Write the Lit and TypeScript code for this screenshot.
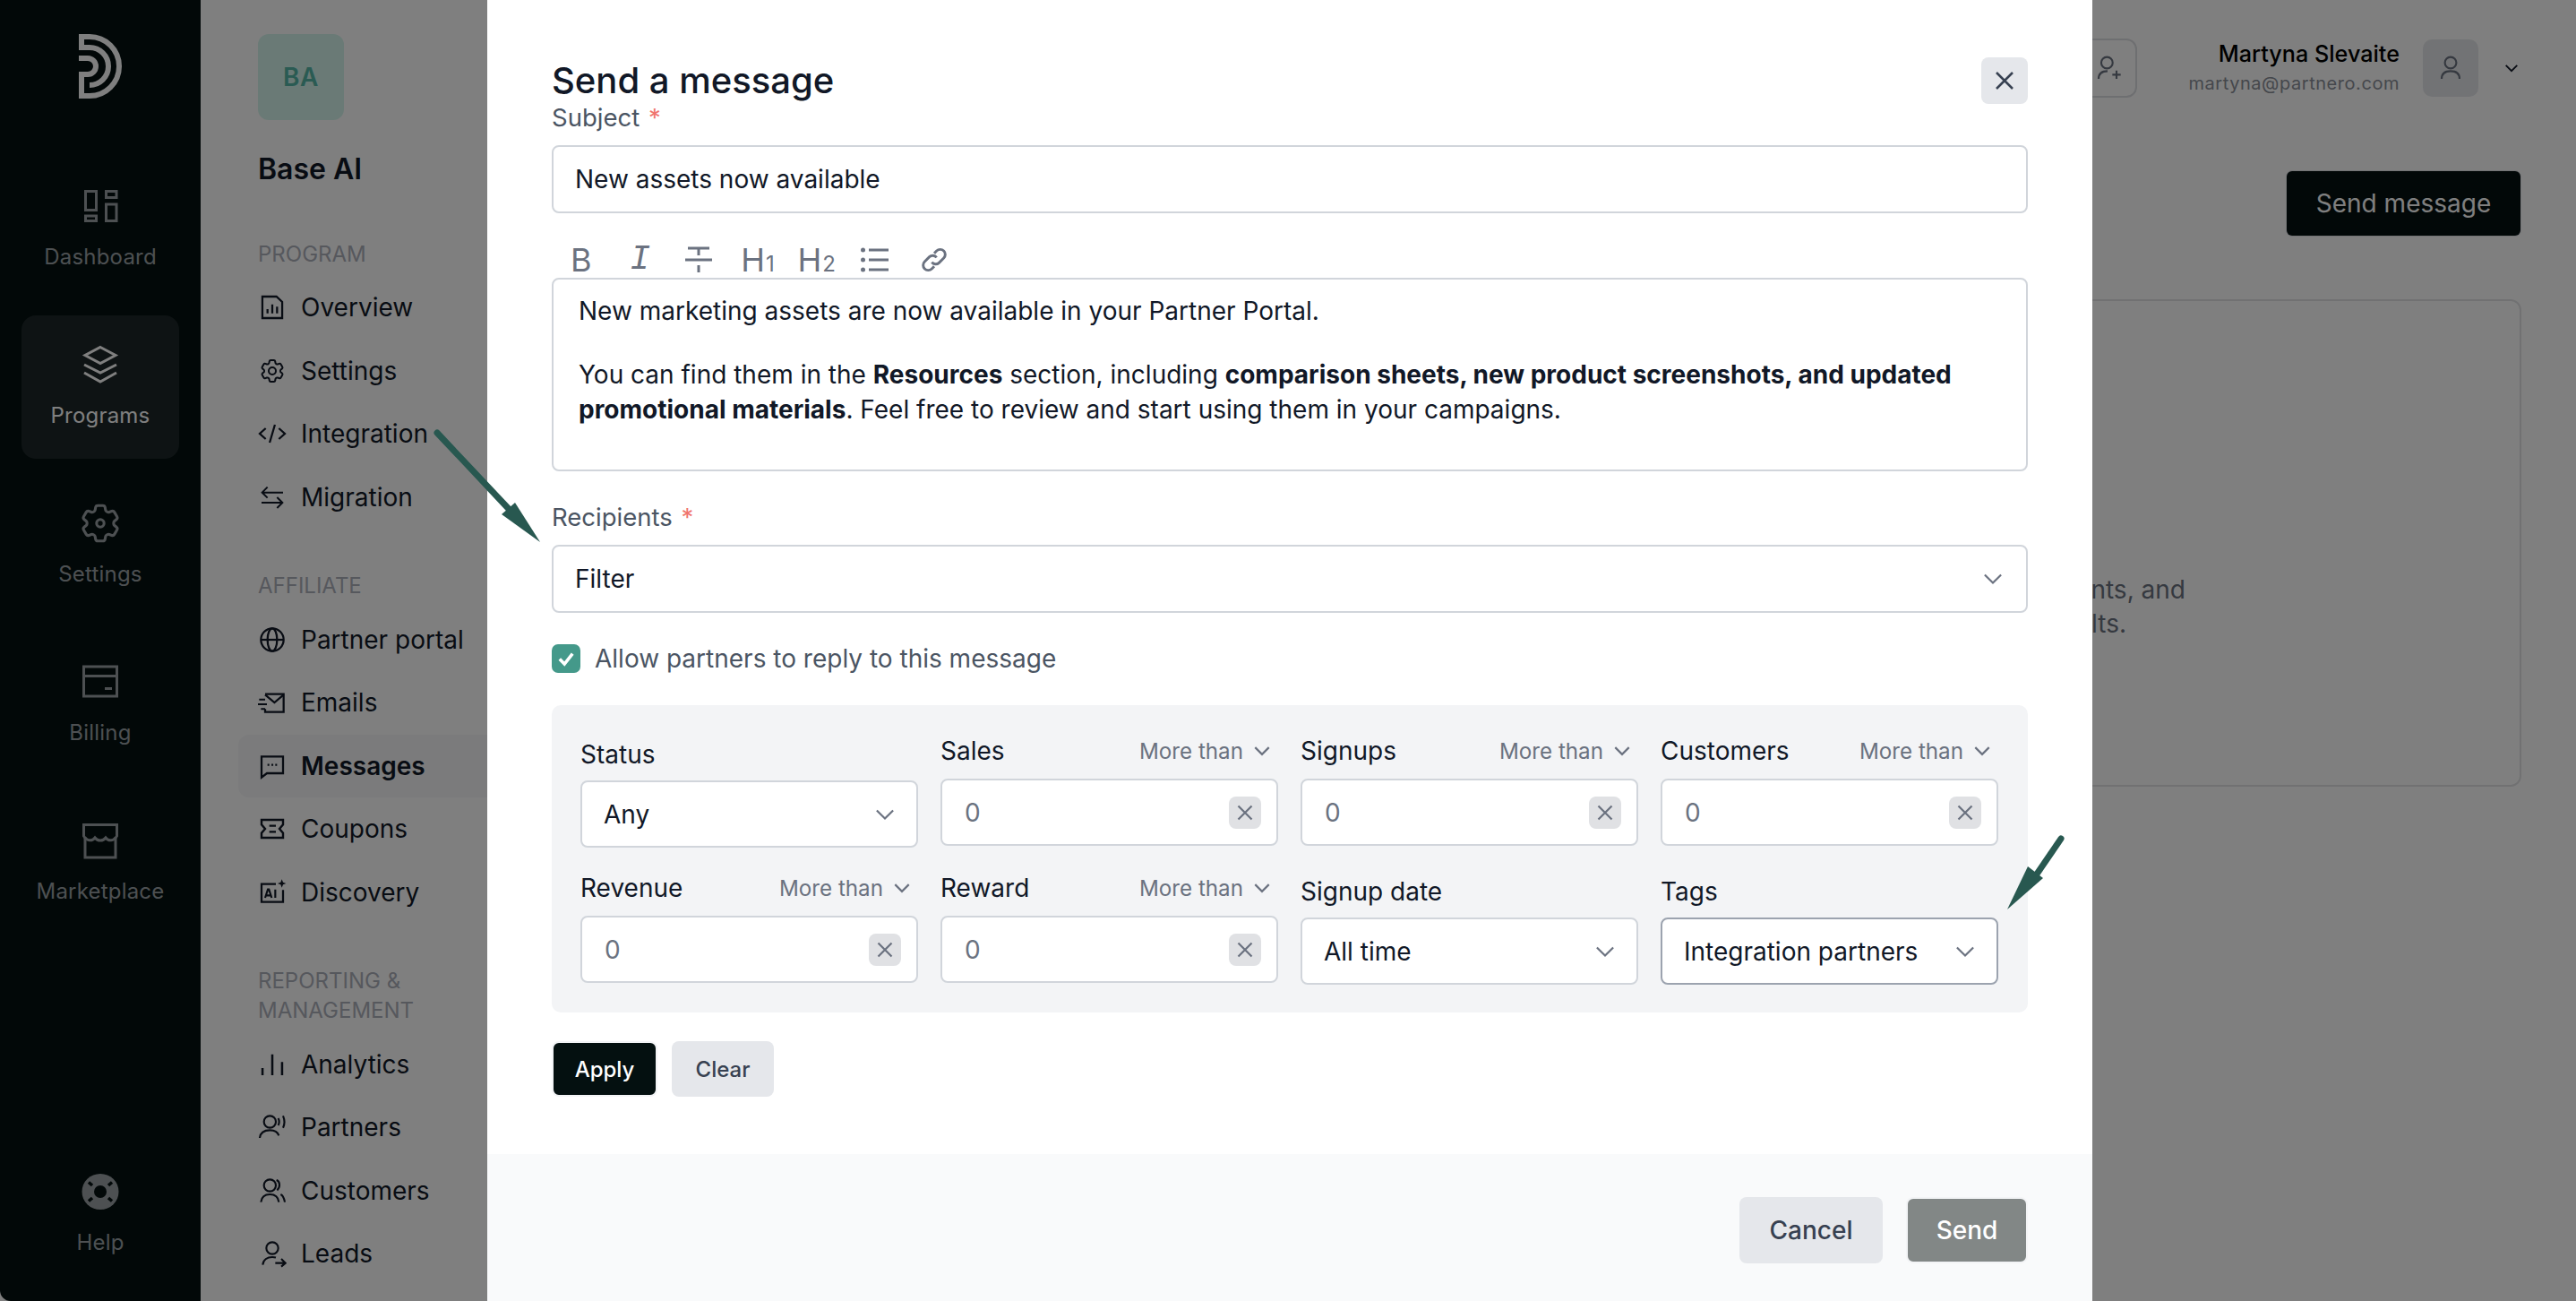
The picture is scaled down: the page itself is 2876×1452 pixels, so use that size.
import { LitElement, html, css, svg } from "lit";
import { customElement } from "lit/decorators.js";

const ic = (box: number, body: unknown, size = 32) => html`<svg class="ic" width=${size} height=${size} viewBox="0 0 ${box} ${box}" fill="none" stroke="currentColor" stroke-width="1.5">${body}</svg>`;

const gear = svg`<path d="M9.594 3.94c.09-.542.56-.94 1.11-.94h2.593c.55 0 1.02.398 1.11.94l.213 1.281c.063.374.313.686.645.87.074.04.147.083.22.127.325.196.72.257 1.075.124l1.217-.456a1.125 1.125 0 0 1 1.37.49l1.296 2.247a1.125 1.125 0 0 1-.26 1.431l-1.003.827c-.293.241-.438.613-.43.992a7.723 7.723 0 0 1 0 .255c-.008.378.137.75.43.991l1.004.827c.424.35.534.955.26 1.43l-1.298 2.247a1.125 1.125 0 0 1-1.369.491l-1.217-.456c-.355-.133-.75-.072-1.076.124a6.47 6.47 0 0 1-.22.128c-.331.183-.581.495-.644.869l-.213 1.281c-.09.543-.56.94-1.11.94h-2.594c-.55 0-1.019-.398-1.11-.94l-.213-1.281c-.062-.374-.312-.686-.644-.87a6.52 6.52 0 0 1-.22-.127c-.325-.196-.72-.257-1.076-.124l-1.217.456a1.125 1.125 0 0 1-1.369-.49l-1.297-2.247a1.125 1.125 0 0 1 .26-1.431l1.004-.827c.292-.24.437-.613.43-.991a6.932 6.932 0 0 1 0-.255c.007-.38-.138-.751-.43-.992l-1.004-.827a1.125 1.125 0 0 1-.26-1.43l1.297-2.247a1.125 1.125 0 0 1 1.37-.491l1.216.456c.356.133.751.072 1.076-.124.072-.044.146-.086.22-.128.332-.183.582-.495.644-.869l.214-1.28Z"/>`;

const railIcons: Record<string, unknown> = {
  dashboard: svg`<g stroke-width="3"><rect x="7.5" y="7.5" width="12" height="21"/><rect x="7.5" y="35" width="12" height="5.5"/><rect x="30.5" y="7.5" width="11.5" height="7"/><rect x="30.5" y="22" width="11.5" height="18.5"/></g>`,
  programs: svg`<g stroke-width="3"><path d="M24 4.5 41 13.5 24 22.5 7 13.5Z"/><path d="M6 24 24 33 42 24"/><path d="M6 33 24 43 42 33"/></g>`,
  settings: svg`<g transform="translate(-2.4 -2.4) scale(2.2)" stroke-width="1.4">${gear}<circle cx="12" cy="12" r="1.9"/></g>`,
  billing: svg`<g stroke-width="3"><rect x="5.5" y="7" width="37" height="33"/><path d="M5.5 17.5H42.5"/><path d="M29 31.5H37"/></g>`,
  marketplace: svg`<g stroke-width="3"><path d="M7 20V43H41V20"/><path d="M5.5 6.500H42.500V19C39 25 33 25 30 21C27 25 21 25 18 21C15 25 9 25 5.500 19Z"/></g>`,
  help: svg`<ellipse cx="24" cy="24" rx="20.500" ry="20" fill="currentColor" stroke="none"/><circle cx="24" cy="24" r="7" fill="#041010" stroke="none"/><g stroke="#041010" stroke-width="3.500"><path d="M11 13.500 15 17"/><path d="M37 13.500 33 17"/><path d="M11 34.500 15 31"/><path d="M37 34.500 33 31"/></g>`,
};

const navIcons: Record<string, unknown> = {
  overview: svg`<path d="M3.700 3H15.500L20.300 7.500V21H3.700Z" stroke-width="1.700"/><path d="M8 17V13.500M12 17V9.500M16 17V11.500" stroke-width="1.700"/>`,
  settings: svg`${gear}<circle cx="12" cy="12" r="3"/>`,
  code: svg`<path d="M6.500 7.500 1.500 12 6.500 16.500M17.500 7.500 22.500 12 17.500 16.500M14.200 4.500 9.800 19.500" stroke-width="1.700"/>`,
  swap: svg`<path d="M21 8H4M8 3.500 3.500 8 8 12.500M3 16.500H20M16 12 20.500 16.500 16 21"/>`,
  globe: svg`<circle cx="12" cy="12" r="9.500" stroke-width="1.700"/><ellipse cx="12" cy="12" rx="4" ry="9.500" stroke-width="1.700"/><path d="M2.500 12H21.500" stroke-width="1.700"/>`,
  emails: svg`<path d="M6 5H21.500V20H6V17.500" stroke-width="1.700"/><path d="M6 5.500 13.800 12 21.500 5.500" stroke-width="1.700"/><path d="M1 9.500H6M-.5 13.500H7.500M2.500 17.500H6" stroke-width="1.500"/>`,
  chat: svg`<path d="M3 4H21V18H7.500L3 21.500Z" stroke-width="1.700"/><path d="M8 11H9.500M11.300 11H12.800M14.500 11H16" stroke-width="1.700"/>`,
  coupon: svg`<path d="M3 4.500H21V8.500L18 12 21 15.500V19.500H3V15.500L6 12 3 8.500Z" stroke-width="1.800"/><path d="M9.500 9.500H15M9.500 14.500H15" stroke-width="1.800"/>`,
  ai: svg`<path d="M15 5H3V20H21V10" stroke-width="1.700"/><path d="M6 16.500 8.300 9.500H9.200L11.500 16.500M7 14.500H10.500M14.500 9.500V16.500" stroke-width="1.600"/><path d="M20 1 21 3.500 23.500 4.500 21 5.500 20 8 19 5.500 16.500 4.500 19 3.500Z" fill="currentColor" stroke="none"/>`,
  bars: svg`<path d="M3.800 21V15M12 21V3.500M20.200 21V10" stroke-width="1.900"/>`,
  partners: svg`<circle cx="10" cy="7.500" r="5" stroke-width="1.600"/><path d="M1.500 21C2 16.500 5.500 14.500 10 14.500C14 14.500 16.500 16 17.500 19" stroke-width="1.600"/><path d="M17 4.500C18 6.500 18 8.500 17 10.500M21 2.500C22.500 6 22.500 9.500 21 12.500" stroke-width="1.600"/>`,
  customers: svg`<circle cx="10" cy="7.500" r="5" stroke-width="1.600"/><path d="M2.500 21.500C3 17 6 15 10 15C14 15 17 17 17.500 21.500" stroke-width="1.600"/><path d="M15.500 3C18.500 4 19 9 16 11.500M19 15C21 16 22 18.500 22.500 21.500" stroke-width="1.600"/>`,
  leads: svg`<circle cx="12" cy="7.500" r="5" stroke-width="1.600"/><path d="M4 21.500C4.500 17 8 15 12 15C13 15 14 15.100 15 15.400" stroke-width="1.600"/><path d="M14.500 20H23M19.500 16.500 23 20 19.500 23" stroke-width="1.600"/>`,
};

const chevron = (size = 20, sw = 1.700) => html`<svg class="chev" width=${size} height=${size} viewBox="0 0 20 20" fill="none" stroke="currentColor" stroke-width=${sw}><path d="M3 6.500 10 13.500 17 6.500"/></svg>`;
const xIcon = (size = 16, sw = 2) => html`<svg width=${size} height=${size} viewBox="0 0 16 16" fill="none" stroke="currentColor" stroke-width=${sw}><path d="M2 2 14 14M14 2 2 14"/></svg>`;

const sections = [
  { label: ["PROGRAM"], items: [["overview", "Overview"], ["settings", "Settings"], ["code", "Integration"], ["swap", "Migration"]] },
  { label: ["AFFILIATE"], items: [["globe", "Partner portal"], ["emails", "Emails"], ["chat", "Messages"], ["coupon", "Coupons"], ["ai", "Discovery"]] },
  { label: ["REPORTING &", "MANAGEMENT"], items: [["bars", "Analytics"], ["partners", "Partners"], ["customers", "Customers"], ["leads", "Leads"]] },
];

@customElement("app-root")
export class AppRoot extends LitElement {
  static styles = css`
    :host { display: block; width: 2876px; height: 1452px; position: relative; overflow: hidden; font-family: Inter, "Noto Sans", sans-serif; background: #fff; color: #111827; }
    * { box-sizing: border-box; }
    svg { display: block; flex: none; }
    .page { display: flex; height: 1452px; }

    .rail { width: 224px; flex: none; background: #041010; display: flex; flex-direction: column; padding: 38px 24px 17px; color: #9aa1a5; border-bottom-left-radius: 12px; }
    .logo { align-self: center; color: #fff; margin-bottom: 65px; }
    .rail-list { display: flex; flex-direction: column; gap: 17px; }
    .rail-item { height: 160px; border-radius: 16px; padding-top: 31px; display: flex; flex-direction: column; align-items: center; font-size: 24px; line-height: 36px; }
    .rail-item span { margin-top: 15px; letter-spacing: .2px; }
    .rail-item.active { background: #1c2728; color: #fff; }
    .rail-item.help { margin-top: auto; }

    .subnav { width: 320px; flex: none; background: #fff; padding: 38px 0 0 64px; overflow: hidden; }
    .ba { width: 96px; height: 96px; border-radius: 12px; background: #d4f5ec; color: #54b6a6; display: flex; align-items: center; justify-content: center; font-size: 28px; font-weight: 600; letter-spacing: .5px; }
    .brand { margin-top: 35px; font-size: 32px; line-height: 40px; font-weight: 600; }
    .section { margin-top: 47px; }
    .section.first { margin-top: 58px; }
    .sec-label { font-size: 24px; line-height: 33px; color: #adb0bb; }
    .nav-list { margin-top: 8px; }
    .nav-item { height: 70.6px; margin-left: -22px; padding-left: 22px; display: flex; align-items: center; gap: 16px; font-size: 28px; white-space: nowrap; border-radius: 12px 0 0 12px; color: #111827; }
    .nav-item.active { background: #f6f7f8; font-weight: 600; }

    .main { flex: 1; min-width: 0; padding: 43px 61px 0 0; display: flex; flex-direction: column; align-items: flex-end; }
    .top { display: flex; align-items: center; height: 66px; }
    .invite { width: 62px; height: 66px; border: 2px solid #dcdee2; border-radius: 12px; display: flex; align-items: center; justify-content: center; color: #6b7280; }
    .who { margin-left: 57px; text-align: right; display: flex; flex-direction: column; }
    .who b { font-weight: 500; font-size: 25.200px; line-height: 34px; color: #000; }
    .who small { font-size: 20px; line-height: 32px; letter-spacing: .55px; color: #8a8f99; }
    .avatar { width: 62px; height: 64px; margin-left: 26px; background: #e5e7eb; border-radius: 10px; display: flex; align-items: center; justify-content: center; color: #6b7280; }
    .caret { margin-left: 28px; margin-right: 2px; color: #111827; }
    .send-top { margin-top: 82px; margin-right: 1px; width: 261px; height: 72px; background: #041010; color: #fff; border-radius: 6px; display: flex; align-items: center; justify-content: center; font-size: 28px; box-shadow: 0 0 0 1px #e5e7eb; }
    .card { margin-top: 71px; width: 2200px; height: 544px; border: 2px solid #e2e3e5; border-radius: 12px; padding: 303px 373px 0 0; display: flex; flex-direction: column; align-items: flex-end; font-size: 28px; line-height: 38px; color: #6b7280; white-space: nowrap; }
    .card .second { margin-right: 66px; }

    .overlay { position: absolute; inset: 0; background: rgba(0,0,0,.5); display: flex; justify-content: center; padding-left: 4px; }
    .modal { width: 1792px; height: 1452px; background: #fff; display: flex; flex-direction: column; }
    .body { height: 1288px; padding: 64px 72px 0; display: flex; flex-direction: column; }
    .head { display: flex; align-items: center; justify-content: space-between; height: 52px; }
    .head h2 { margin: 0 0 2px; font-size: 40px; font-weight: 500; color: #111827; }
    .close { width: 52px; height: 52px; border-radius: 8px; background: #e5e7eb; color: #374151; display: flex; align-items: center; justify-content: center; }
    .lab { font-size: 27.500px; line-height: 30px; height: 30px; color: #4b5563; }
    .lab i { font-style: normal; color: #f0746e; margin-left: 2px; }
    .mb { margin-bottom: 16px; }
    .box { height: 76px; border: 2px solid #d1d5db; border-radius: 8px; background: #fff; display: flex; align-items: center; justify-content: space-between; padding: 0 24px; font-size: 28px; color: #111827; flex: none; }
    .box .chev { color: #6b7280; }
    .tools { margin-top: 34px; height: 38px; display: flex; color: #6b7280; flex: none; }
    .tool { width: 65.700px; height: 36px; display: flex; align-items: baseline; justify-content: center; font-size: 36px; line-height: 36px; }
    .tool.svg { align-items: center; }
    .tool em { font-family: "Liberation Mono", monospace; font-style: italic; font-size: 38px; }
    .tool sub { font-size: 24px; line-height: 22px; vertical-align: baseline; margin-left: 1px; }
    .editor { height: 216px; border: 2px solid #d1d5db; border-radius: 8px; padding: 16px 28px 0 28px; font-size: 28px; line-height: 38.500px; color: #111827; flex: none; }
    .editor p { margin: 0 0 32.500px; }
    .editor b { font-weight: 700; }
    .recip { margin-top: 36px; }
    .check-row { margin-top: 35px; height: 32px; display: flex; align-items: center; gap: 16px; font-size: 28px; color: #4b5563; flex: none; }
    .check { width: 32px; height: 32px; border-radius: 7px; background: #44998a; display: flex; align-items: center; justify-content: center; }
    .panel { margin-top: 36px; height: 343px; border-radius: 10px; background: #f3f4f6; padding: 32px 33px 32px 32px; display: grid; grid-template-columns: repeat(4, 1fr); grid-auto-rows: 127px; column-gap: 25px; row-gap: 26px; flex: none; }
    .field { min-width: 0; }
    .field.sel { padding-top: 4px; }
    .f-head { height: 38px; display: flex; align-items: center; justify-content: space-between; font-size: 28px; color: #111827; }
    .more { display: flex; align-items: center; gap: 10px; padding-right: 7px; font-size: 24.200px; color: #6b7280; }
    .field .box { height: 75px; margin-top: 12px; padding: 0 17px 0 25px; }
    .field.sel .box { margin-top: 10px; padding: 0 22px 0 24px; }
    .field .box.focus { border-color: #9ca3af; }
    .zero { color: #6b7280; }
    .clr { width: 36px; height: 36px; border-radius: 8px; background: #e0e1e4; color: #6b7280; display: flex; align-items: center; justify-content: center; }
    .acts { margin-top: 32px; display: flex; gap: 16px; flex: none; }
    .btn { display: flex; align-items: center; justify-content: center; font-weight: 500; border-radius: 8px; }
    .apply { width: 118px; height: 62px; background: #041010; color: #fff; border: 2px solid #f3f4f6; font-size: 24px; }
    .clear { width: 114px; height: 62px; background: #e5e7eb; color: #374151; font-size: 24px; }
    .foot { flex: 1; background: #f9fafb; padding: 48px 72px 0; display: flex; justify-content: flex-end; gap: 26px; }
    .cancel { width: 160px; height: 74px; background: #e5e7eb; color: #374151; font-size: 28px; }
    .send { width: 136px; height: 74px; background: #828786; color: #fff; border: 2px solid #f3f4f6; font-size: 28px; }

    .arrows { position: absolute; left: 0; top: 0; pointer-events: none; }
  `;

  private numField(label: string) {
    return html`<div class="field">
      <div class="f-head"><span>${label}</span><span class="more">More than ${chevron(22, 2)}</span></div>
      <div class="box"><span class="zero">0</span><span class="clr">${xIcon(20, 1.800)}</span></div>
    </div>`;
  }
  private selField(label: string, value: string, focus = false) {
    return html`<div class="field sel">
      <div class="f-head"><span>${label}</span></div>
      <div class="box ${focus ? "focus" : ""}"><span>${value}</span>${chevron(26)}</div>
    </div>`;
  }

  render() {
    const rail = [["dashboard", "Dashboard"], ["programs", "Programs"], ["settings", "Settings"], ["billing", "Billing"], ["marketplace", "Marketplace"]];
    return html`
      <div class="page">
        <aside class="rail">
          <svg class="logo" width="48" height="72" viewBox="0 0 48 72" fill="none" stroke="currentColor" stroke-width="6">
            <path d="M0 27H10A9 9 0 0 1 10 45H3V69H12A33 33 0 0 0 12 3H3V15H12A21 21 0 0 1 12 57"/>
          </svg>
          <div class="rail-list">
            ${rail.map(([k, t]) => html`<div class="rail-item ${k === "programs" ? "active" : ""}">${ic(48, railIcons[k], 48)}<span>${t}</span></div>`)}
          </div>
          <div class="rail-item help">${ic(48, railIcons.help, 48)}<span>Help</span></div>
        </aside>

        <nav class="subnav">
          <div class="ba">BA</div>
          <div class="brand">Base AI</div>
          ${sections.map((s, i) => html`<div class="section ${i === 0 ? "first" : ""}">
            <div class="sec-label">${s.label.map((l) => html`<div>${l}</div>`)}</div>
            <div class="nav-list">
              ${s.items.map(([k, t]) => html`<div class="nav-item ${t === "Messages" ? "active" : ""}">${ic(24, navIcons[k])}<span>${t}</span></div>`)}
            </div>
          </div>`)}
        </nav>

        <main class="main">
          <div class="top">
            <div class="invite">${ic(24, svg`<circle cx="10" cy="7.500" r="4.800" stroke-width="1.600"/><path d="M3 21C3 16.500 6 14.500 10.500 14.500M18 14V21M14.500 17.500H21.500" stroke-width="1.600"/>`)}</div>
            <div class="who"><b>Martyna Slevaite</b><small>martyna@partnero.com</small></div>
            <div class="avatar">${ic(24, svg`<circle cx="12" cy="7.500" r="4.800" stroke-width="1.600"/><path d="M4.500 21C4.500 16.500 7.500 14.500 12 14.500S19.500 16.500 19.500 21" stroke-width="1.600"/>`)}</div>
            <div class="caret">${chevron(18, 2)}</div>
          </div>
          <div class="send-top">Send message</div>
          <div class="card">
            <div>Send updates to your partners about new assets, announcements, and</div>
            <div class="second">share your best results.</div>
          </div>
        </main>
      </div>

      <div class="overlay">
        <section class="modal">
          <div class="body">
            <div class="head"><h2>Send a message</h2><div class="close">${xIcon(24, 1.700)}</div></div>
            <div class="lab mb">Subject <i>*</i></div>
            <div class="box">New assets now available</div>
            <div class="tools">
              <div class="tool">B</div>
              <div class="tool"><em>I</em></div>
              <div class="tool svg"><svg width="32" height="30" viewBox="0 0 32 30" fill="none" stroke="currentColor" stroke-width="3"><path d="M4 2H28M16 2V10M1 15H31M16 21V29"/></svg></div>
              <div class="tool">H<sub>1</sub></div>
              <div class="tool">H<sub>2</sub></div>
              <div class="tool svg"><svg width="32" height="28" viewBox="0 0 32 28" fill="none" stroke="currentColor" stroke-width="3"><path d="M9 3H31M9 14H31M9 25H31"/><g fill="currentColor" stroke="none"><circle cx="2.500" cy="3" r="2.500"/><circle cx="2.500" cy="14" r="2.500"/><circle cx="2.500" cy="25" r="2.500"/></g></svg></div>
              <div class="tool svg"><svg width="32" height="32" viewBox="0 0 24 24" fill="none" stroke="currentColor" stroke-width="2.200"><path d="M10 14a4 4 0 0 0 6 .5l4-4a4.200 4.200 0 0 0-6-6l-2 2"/><path d="M14 10a4 4 0 0 0-6-.5l-4 4a4.200 4.200 0 0 0 6 6l2-2"/></svg></div>
            </div>
            <div class="editor">
              <p>New marketing assets are now available in your Partner Portal.</p>
              <p>You can find them in the <b>Resources</b> section, including <b>comparison sheets, new product screenshots, and updated promotional materials</b>. Feel free to review and start using them in your campaigns.</p>
            </div>
            <div class="lab mb recip">Recipients <i>*</i></div>
            <div class="box"><span>Filter</span>${chevron(26)}</div>
            <div class="check-row">
              <div class="check"><svg width="24" height="24" viewBox="0 0 20 20" fill="none" stroke="#fff" stroke-width="3"><path d="M4 10.500 8.500 15 16 5.500"/></svg></div>
              <span>Allow partners to reply to this message</span>
            </div>
            <div class="panel">
              ${this.selField("Status", "Any")}
              ${this.numField("Sales")}
              ${this.numField("Signups")}
              ${this.numField("Customers")}
              ${this.numField("Revenue")}
              ${this.numField("Reward")}
              ${this.selField("Signup date", "All time")}
              ${this.selField("Tags", "Integration partners", true)}
            </div>
            <div class="acts"><div class="btn apply">Apply</div><div class="btn clear">Clear</div></div>
          </div>
          <div class="foot"><div class="btn cancel">Cancel</div><div class="btn send">Send</div></div>
        </section>
      </div>

      <svg class="arrows" width="2876" height="1452" viewBox="0 0 2876 1452" fill="none">
        <path d="M488 483 568 568" stroke="#285850" stroke-width="7" stroke-linecap="round"/>
        <path d="M575 561 560 574 603 605Z" fill="#285850"/>
        <path d="M2301 936 2273 977" stroke="#285850" stroke-width="7" stroke-linecap="round"/>
        <path d="M2264 967 2281 980 2241 1015Z" fill="#285850"/>
      </svg>
    `;
  }
}
